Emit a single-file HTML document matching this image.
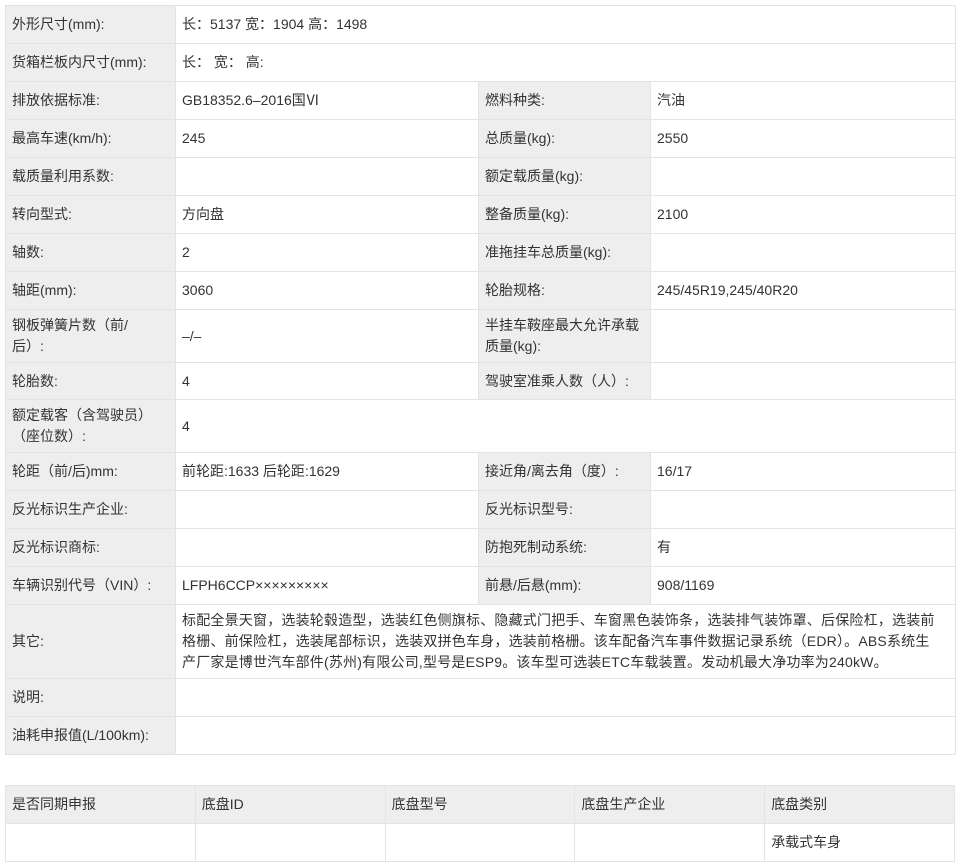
<!DOCTYPE html>
<html><head><meta charset="utf-8"><style>
body{margin:0;background:#fff;font-family:"Liberation Sans","Noto Sans CJK SC",sans-serif;font-size:14px;color:#333;}
table{border-collapse:collapse;position:absolute;left:5px;width:950px;table-layout:fixed;}
td{border:1px solid #e3e3e3;padding:0 6px;vertical-align:middle;line-height:21px;}
td.l{background:#eeeeee;}
#t1{top:5px;}
#t2{top:785px;}
</style></head><body>
<table id="t1">
<colgroup><col style="width:170px"><col style="width:303px"><col style="width:172px"><col style="width:305px"></colgroup>
<tr style="height:38px"><td class="l">外形尺寸(mm):</td><td colspan="3">长：5137 宽：1904 高：1498</td></tr>
<tr style="height:38px"><td class="l">货箱栏板内尺寸(mm):</td><td colspan="3">长： 宽： 高:</td></tr>
<tr style="height:38px"><td class="l">排放依据标准:</td><td>GB18352.6–2016国Ⅵ</td><td class="l">燃料种类:</td><td>汽油</td></tr>
<tr style="height:38px"><td class="l">最高车速(km/h):</td><td>245</td><td class="l">总质量(kg):</td><td>2550</td></tr>
<tr style="height:38px"><td class="l">载质量利用系数:</td><td></td><td class="l">额定载质量(kg):</td><td></td></tr>
<tr style="height:38px"><td class="l">转向型式:</td><td>方向盘</td><td class="l">整备质量(kg):</td><td>2100</td></tr>
<tr style="height:38px"><td class="l">轴数:</td><td>2</td><td class="l">准拖挂车总质量(kg):</td><td></td></tr>
<tr style="height:38px"><td class="l">轴距(mm):</td><td>3060</td><td class="l">轮胎规格:</td><td>245/45R19,245/40R20</td></tr>
<tr style="height:53px"><td class="l">钢板弹簧片数（前/<br>后）:</td><td>–/–</td><td class="l">半挂车鞍座最大允许承载质量(kg):</td><td></td></tr>
<tr style="height:37px"><td class="l">轮胎数:</td><td>4</td><td class="l">驾驶室准乘人数（人）:</td><td></td></tr>
<tr style="height:53px"><td class="l">额定载客（含驾驶员）（座位数）:</td><td colspan="3">4</td></tr>
<tr style="height:38px"><td class="l">轮距（前/后)mm:</td><td>前轮距:1633 后轮距:1629</td><td class="l">接近角/离去角（度）:</td><td>16/17</td></tr>
<tr style="height:38px"><td class="l">反光标识生产企业:</td><td></td><td class="l">反光标识型号:</td><td></td></tr>
<tr style="height:38px"><td class="l">反光标识商标:</td><td></td><td class="l">防抱死制动系统:</td><td>有</td></tr>
<tr style="height:38px"><td class="l">车辆识别代号（VIN）:</td><td>LFPH6CCP×××××××××</td><td class="l">前悬/后悬(mm):</td><td>908/1169</td></tr>
<tr style="height:74px"><td class="l">其它:</td><td colspan="3" style="letter-spacing:0.2px;white-space:nowrap">标配全景天窗，选装轮毂造型，选装红色侧旗标、隐藏式门把手、车窗黑色装饰条，选装排气装饰罩、后保险杠，选装前<br>格栅、前保险杠，选装尾部标识，选装双拼色车身，选装前格栅。该车配备汽车事件数据记录系统（EDR）。ABS系统生<br>产厂家是博世汽车部件(苏州)有限公司,型号是ESP9。该车型可选装ETC车载装置。发动机最大净功率为240kW。</td></tr>
<tr style="height:38px"><td class="l">说明:</td><td colspan="3"></td></tr>
<tr style="height:38px"><td class="l">油耗申报值(L/100km):</td><td colspan="3"></td></tr>
</table>
<table id="t2">
<tr style="height:38px"><td class="l">是否同期申报</td><td class="l">底盘ID</td><td class="l">底盘型号</td><td class="l">底盘生产企业</td><td class="l">底盘类别</td></tr>
<tr style="height:38px"><td></td><td></td><td></td><td></td><td>承载式车身</td></tr>
</table>
</body></html>
